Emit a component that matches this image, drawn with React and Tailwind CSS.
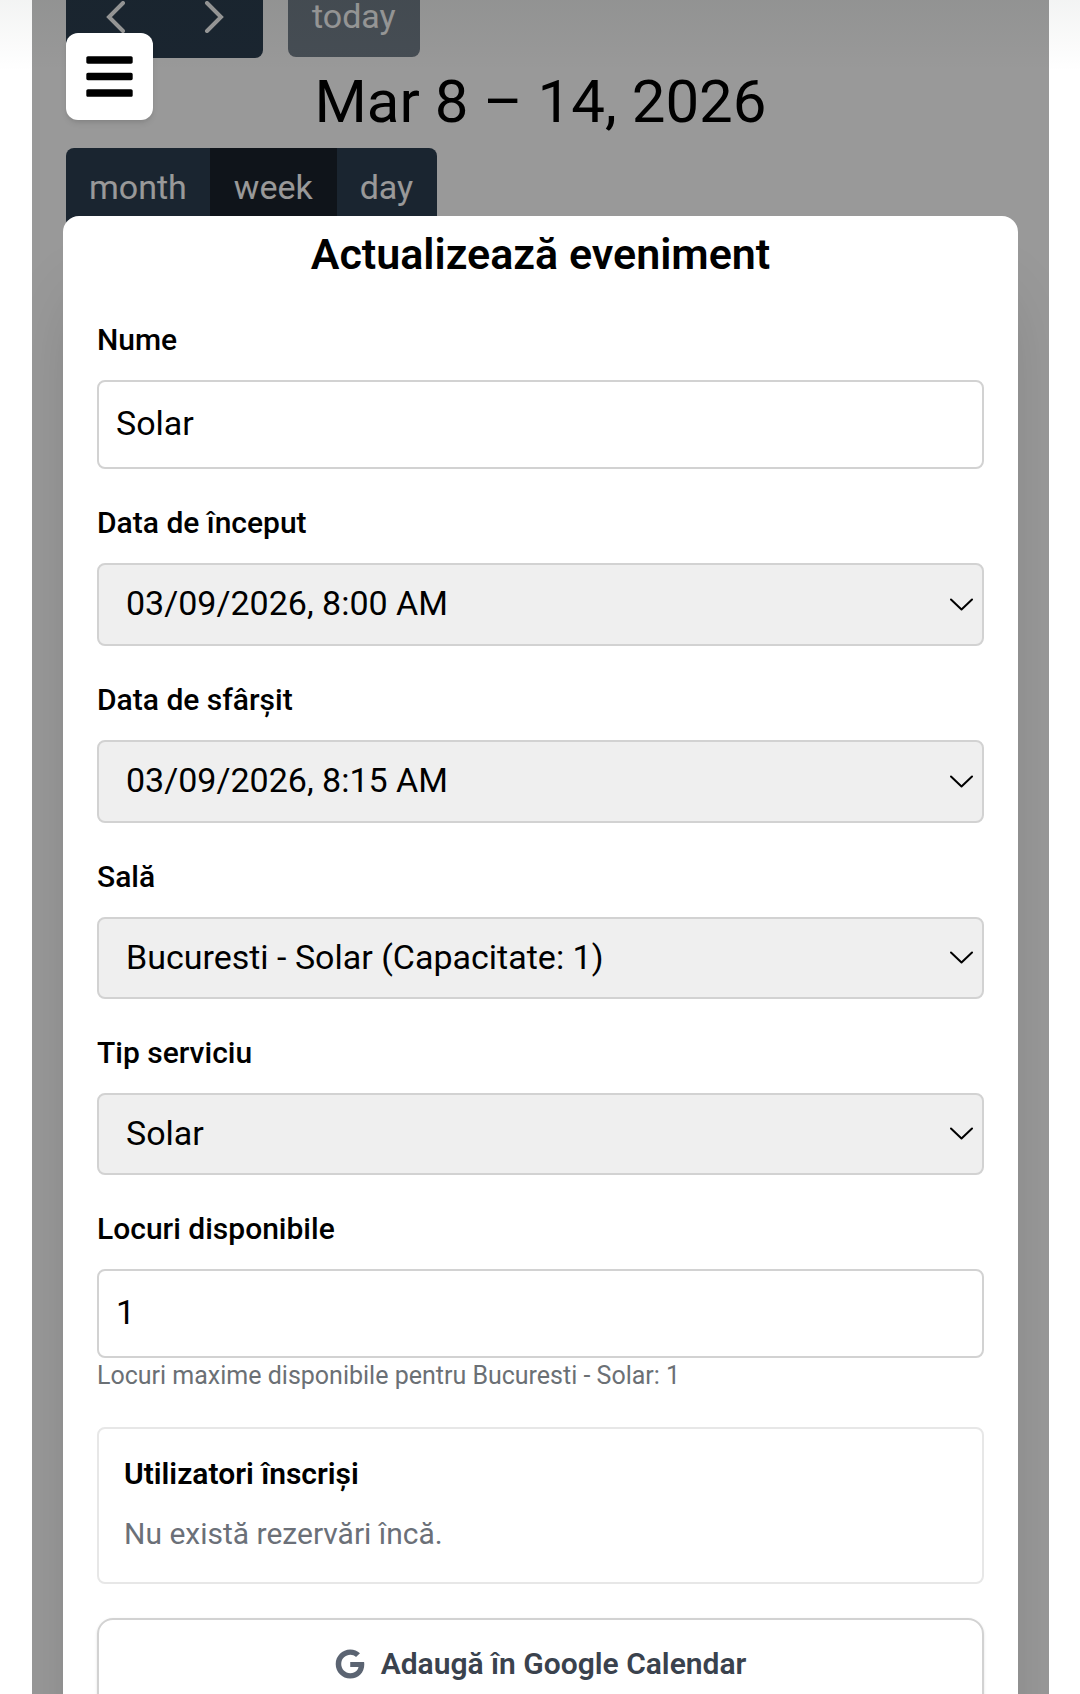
// src/pages/CalendarEventEditor.jsx

import React, { useState } from 'react';
import { FaBars, FaGoogle } from 'react-icons/fa';

const views = ['month', 'week', 'day'];

const rooms = [
  { id: 'bucuresti-solar', label: 'Bucuresti - Solar (Capacitate: 1)' }
];

const serviceTypes = [{ id: 'solar', label: 'Solar' }];

const startDates = [{ id: '2026-03-09T08:00', label: '03/09/2026, 8:00 AM' }];
const endDates = [{ id: '2026-03-09T08:15', label: '03/09/2026, 8:15 AM' }];

function Label({ htmlFor, children }) {
  return (
    <label htmlFor={htmlFor} className="block mb-5 text-[30px] leading-[40px] font-medium">
      {children}
    </label>
  );
}

function TextField({ id, label, hint, ...props }) {
  return (
    <div>
      <Label htmlFor={id}>{label}</Label>
      <input
        id={id}
        className="block w-full h-[89px] px-[17px] pb-1 text-[34px] bg-white border-2 border-[#d2d2d2] rounded-lg focus:outline-none"
        {...props}
      />
      {hint && <p className="text-[25px] leading-[35px] text-[#6b7075]">{hint}</p>}
    </div>
  );
}

function SelectField({ id, label, options, value, onChange, tall = false }) {
  return (
    <div>
      <Label htmlFor={id}>{label}</Label>
      <div className={tall ? 'relative h-[83px]' : 'relative h-[82px]'}>
        <select
          id={id}
          value={value}
          onChange={(e) => onChange(e.target.value)}
          className="block w-full h-full pl-[27px] pr-16 pb-0.5 text-[34px] appearance-none bg-[#efefef] border-2 border-[#d2d2d2] rounded-lg focus:outline-none"
        >
          {options.map((option) => (
            <option key={option.id} value={option.id}>{option.label}</option>
          ))}
        </select>
        <svg
          viewBox="0 0 24 14"
          className="absolute right-[10px] top-1/2 -translate-y-1/2 w-6 h-[14px] pointer-events-none"
          fill="none"
          stroke="#000"
          strokeWidth="2"
          strokeLinecap="round"
          strokeLinejoin="round"
        >
          <path d="M1 1.5 11.5 11.5 22 1.5" />
        </svg>
      </div>
    </div>
  );
}

function Arrow({ d }) {
  return (
    <svg viewBox="0 0 20 32" className="w-5 h-8" fill="none" stroke="currentColor" strokeWidth="4" strokeLinecap="round">
      <path d={d} />
    </svg>
  );
}

function CalendarToolbar({ view, onViewChange }) {
  return (
    <header className="px-[34px] text-[34px] leading-[30px] text-white">
      <div className="flex gap-[25px] -mt-6">
        <div className="flex h-[82px] rounded-lg overflow-hidden bg-[#2c3e50]">
          <button aria-label="prev" className="w-[99px] flex items-center justify-center">
            <Arrow d="M17 2 3 16 17 30" />
          </button>
          <button aria-label="next" className="w-[98px] flex items-center justify-center">
            <Arrow d="M3 2 17 16 3 30" />
          </button>
        </div>
        <button className="h-[81px] px-6 pb-0.5 rounded-lg bg-[#76808c]">today</button>
      </div>

      <h2 className="mt-2 text-center text-[60px] leading-[72px] text-black">Mar 8 – 14, 2026</h2>

      <div className="flex w-fit mt-[10px] rounded-lg overflow-hidden bg-[#2c3e50]">
        {views.map((name) => (
          <button
            key={name}
            onClick={() => onViewChange(name)}
            className={view === name ? 'h-20 px-6 pb-0.5 -ml-px bg-[#1a222c]' : 'h-20 px-6 pb-0.5 -ml-px'}
          >
            {name}
          </button>
        ))}
      </div>
    </header>
  );
}

export default function App() {
  const [view, setView] = useState('week');
  const [name, setName] = useState('Solar');
  const [start, setStart] = useState(startDates[0].id);
  const [end, setEnd] = useState(endDates[0].id);
  const [room, setRoom] = useState(rooms[0].id);
  const [service, setService] = useState(serviceTypes[0].id);
  const [seats, setSeats] = useState('1');

  return (
    <div className="relative h-screen overflow-hidden bg-white text-black font-['Roboto',sans-serif]">
      <main className="relative h-full ml-8 mr-[31px] overflow-hidden">
        <CalendarToolbar view={view} onViewChange={setView} />

        {/* Modal backdrop */}
        <div className="absolute inset-0 px-[31px] pt-[216px] bg-black/40">
          <div
            role="dialog"
            aria-labelledby="dialog-title"
            className="px-[34px] pt-[14px] pb-10 bg-white rounded-2xl shadow-[0_66px_70px_-20px_rgba(0,0,0,0.2)]"
          >
            <h1 id="dialog-title" className="mb-[42px] text-center text-[43px] leading-[48px] font-semibold">
              Actualizează eveniment
            </h1>

            <form className="flex flex-col gap-[34px]" onSubmit={(e) => e.preventDefault()}>
              <TextField id="name" label="Nume" type="text" value={name} onChange={(e) => setName(e.target.value)} />
              <SelectField id="start" label="Data de început" options={startDates} value={start} onChange={setStart} tall />
              <SelectField id="end" label="Data de sfârșit" options={endDates} value={end} onChange={setEnd} tall />
              <SelectField id="room" label="Sală" options={rooms} value={room} onChange={setRoom} />
              <SelectField id="service" label="Tip serviciu" options={serviceTypes} value={service} onChange={setService} />
              <TextField
                id="seats"
                label="Locuri disponibile"
                inputMode="numeric"
                value={seats}
                onChange={(e) => setSeats(e.target.value)}
                hint="Locuri maxime disponibile pentru Bucuresti - Solar: 1"
              />

              {/* Registered users */}
              <section className="px-[25px] pt-[25px] pb-7 text-[30px] leading-[40px] border-2 border-[#e7e7e7] rounded-lg">
                <h3 className="mb-5 font-semibold">Utilizatori înscriși</h3>
                <p className="text-[#6b7078]">Nu există rezervări încă.</p>
              </section>

              <button
                type="button"
                className="flex items-center justify-center gap-4 h-[91px] text-[30px] font-semibold text-[#3a424d] border-2 border-[#d2d2d2] rounded-2xl shadow-sm"
              >
                <FaGoogle className="size-[30px] text-[#5b6472]" />
                Adaugă în Google Calendar
              </button>
            </form>
          </div>
        </div>
      </main>

      {/* Soft shade under the site header */}
      <div className="absolute inset-x-0 top-0 h-[72px] bg-linear-to-b from-[#0f1f18]/5 to-transparent pointer-events-none" />

      <button
        aria-label="Meniu"
        className="absolute left-[66px] top-[33px] size-[87px] flex items-center justify-center bg-white rounded-xl shadow-md"
      >
        <FaBars className="size-[53px]" />
      </button>
    </div>
  );
}
